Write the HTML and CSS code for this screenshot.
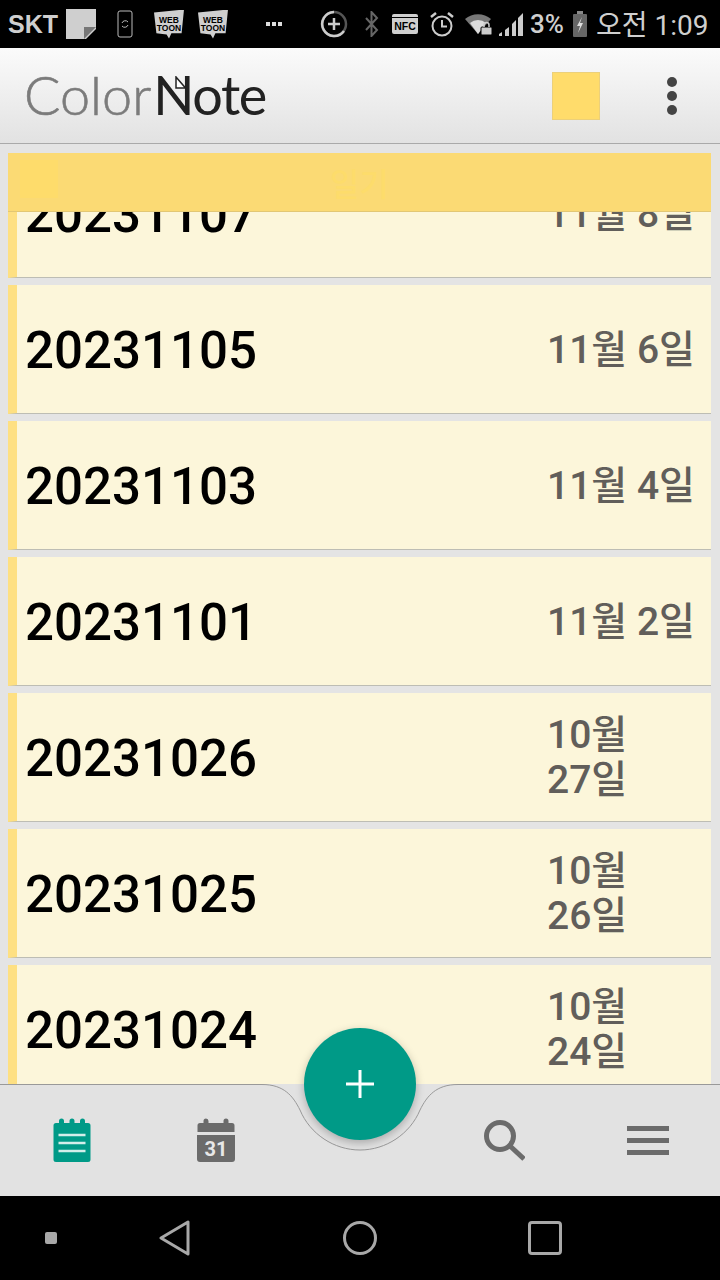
FILE: index.html
```html
<!DOCTYPE html>
<html lang="ko">
<head>
  <meta charset="UTF-8">
  <title>ColorNote</title>
  <link rel="stylesheet" href="styles.css">
</head>
<body>

<div class="phone">

  <!-- status bar -->
  <div class="status">
    <span class="skt">SKT</span>
    <svg class="st st-note" viewBox="0 0 30 30"><path d="M0 0h30v20L20 30H0z" fill="#cfcfcf"/><path d="M30 18L18 30V18z" fill="#777"/></svg>
    <svg class="st st-phone" viewBox="0 0 16 28"><rect x="1" y="1" width="14" height="26" rx="2" fill="none" stroke="#bbb" stroke-width="1"/><path d="M5 13a3.500 3.500 0 0 1 6-1M11 15a3.500 3.500 0 0 1-6 1" fill="none" stroke="#bbb" stroke-width="1"/></svg>
    <span class="toon">WEB<br>TOON</span>
    <span class="toon toon-2">WEB<br>TOON</span>
    <svg class="st st-dots" viewBox="0 0 18 6"><rect x="1" y="1" width="4" height="4" fill="#ddd"/><rect x="7" y="1" width="4" height="4" fill="#ddd"/><rect x="13" y="1" width="4" height="4" fill="#ddd"/></svg>
    <svg class="st st-plus" viewBox="0 0 28 28"><circle cx="14" cy="14" r="12" fill="none" stroke="#555" stroke-width="2.500"/><path d="M14 2A12 12 0 1 0 24 21" fill="none" stroke="#ccc" stroke-width="2.500"/><path d="M14 8v12M8 14h12" stroke="#ccc" stroke-width="2.500"/></svg>
    <svg class="st st-bt" viewBox="0 0 15 26"><path d="M2 7l11 12-5.500 6V1L13 7 2 19" fill="none" stroke="#666" stroke-width="2"/></svg>
    <span class="nfc">NFC</span>
    <svg class="st st-alarm" viewBox="0 0 24 26"><circle cx="12" cy="15" r="9.500" fill="none" stroke="#ccc" stroke-width="2"/><path d="M12 9v6.500h5" fill="none" stroke="#ccc" stroke-width="2"/><path d="M1 6l5-4M23 6l-5-4" stroke="#ccc" stroke-width="2.500"/></svg>
    <svg class="st st-wifi" viewBox="0 0 28 24"><path d="M0 7a20 20 0 0 1 26 0L13 22z" fill="#777"/><path d="M5 11a12 12 0 0 1 16 0l-8 11z" fill="#ddd"/><rect x="16" y="15" width="11" height="8" rx="1" fill="#ccc" stroke="#000"/><path d="M19 15v-2a2.500 2.500 0 0 1 5 0v2" fill="none" stroke="#ccc" stroke-width="1.500"/></svg>
    <svg class="st st-signal" viewBox="0 0 24 24"><path d="M0 24v-2l3-2v4z" fill="#ccc"/><path d="M6 24v-6l4-3v9z" fill="#ccc"/><path d="M13 24V12l4-4v16z" fill="#ccc"/><path d="M19 24V6l5-5v23z" fill="#ccc"/></svg>
    <span class="pct">3%</span>
    <svg class="st st-batt" viewBox="0 0 14 26"><rect x="4" y="0" width="6" height="3" fill="#888"/><rect x="0" y="3" width="14" height="23" rx="1" fill="#666"/><path d="M9 6l-5 9h3l-2 7 5-10H7z" fill="#ddd"/></svg>
    <span class="clock">오전 1:09</span>
  </div>

  <!-- app bar -->
  <div class="appbar">
    <div class="logo"><span class="logo-a">Color</span><span class="logo-b">Note</span>
      <svg class="ear" viewBox="0 0 12 14"><path d="M1 1l9.500 11H1z" fill="#fff" stroke="#222" stroke-width="1.500"/></svg>
    </div>
    <div class="swatch"></div>
    <div class="more"><i></i><i></i><i></i></div>
  </div>

  <!-- note list -->
  <div class="list">
    <div class="row"><span class="name">20231107</span><span class="date">11월 8일</span></div>
    <div class="row"><span class="name">20231105</span><span class="date">11월 6일</span></div>
    <div class="row"><span class="name">20231103</span><span class="date">11월 4일</span></div>
    <div class="row"><span class="name">20231101</span><span class="date">11월 2일</span></div>
    <div class="row"><span class="name">20231026</span><span class="date">10월 27일</span></div>
    <div class="row"><span class="name">20231025</span><span class="date">10월 26일</span></div>
    <div class="row"><span class="name">20231024</span><span class="date">10월 24일</span></div>

    <div class="sticky">
      <div class="sticky-bar">
        <span class="sticky-box"></span>
        <span class="sticky-text">일기</span>
      </div>
    </div>
  </div>

  <!-- bottom tabs -->
  <div class="tabs">
    <svg class="notch" viewBox="0 0 720 70"><path d="M0 .5H262C284 .5 293 12 300 26 310 50 334 66 360 66S410 50 420 26C427 12 436 .5 458 .5H720" fill="none" stroke="#999" stroke-width="1"/></svg>
    <button class="fab">
      <svg viewBox="0 0 30 30"><path d="M15 1v28M1 15h28" stroke="#fff" stroke-width="3"/></svg>
    </button>
    <div class="tab">
      <svg class="tab-ic" viewBox="0 0 38 44"><path d="M3 5h3V3a2.500 2.500 0 0 1 5 0v2h5.500V3a2.500 2.500 0 0 1 5 0v2H27V3a2.500 2.500 0 0 1 5 0v2h3a2.500 2.500 0 0 1 2.500 2.500v34A2.500 2.500 0 0 1 35 44H3a2.500 2.500 0 0 1-2.500-2.500v-34A2.500 2.500 0 0 1 3 5z" fill="#009a87"/><path d="M5.500 17h27M5.500 25h27M5.500 33h27" stroke="#d3eeea" stroke-width="2.500"/></svg>
    </div>
    <div class="tab">
      <div class="cal">
        <svg class="cal-top" viewBox="0 0 38 16"><path d="M3 5h3.500V3a2.500 2.500 0 0 1 5 0v2h15V3a2.500 2.500 0 0 1 5 0v2H35a2.500 2.500 0 0 1 2.500 2.500V14H.5V7.500A2.500 2.500 0 0 1 3 5z" fill="#6b6b6b"/></svg>
        <div class="cal-num">31</div>
      </div>
    </div>
    <div class="tab tab-gap"></div>
    <div class="tab">
      <svg class="search-ic" viewBox="0 0 42 42"><circle cx="17" cy="17" r="13.500" fill="none" stroke="#6b6b6b" stroke-width="5"/><path d="M27 27l14 13" stroke="#6b6b6b" stroke-width="5"/></svg>
    </div>
    <div class="tab">
      <div class="burger"><i></i><i></i><i></i></div>
    </div>
  </div>

  <!-- android nav -->
  <div class="nav">
    <span class="nav-dot"></span>
    <svg class="nav-back" viewBox="0 0 32 36"><path d="M2 18L29 2v32z" fill="none" stroke="#a8a8a8" stroke-width="3" stroke-linejoin="round"/></svg>
    <span class="nav-home"></span>
    <span class="nav-recent"></span>
  </div>

</div>

</body>
</html>
```
FILE: styles.css
```css
* {
  box-sizing: border-box;
}

html, body {
  margin: 0;
  padding: 0;
}

body {
  font-family: Roboto, "Noto Sans CJK KR", sans-serif;
  background-color: #000;
}

.phone {
  width: 720px;
  height: 1280px;
  display: flex;
  flex-direction: column;
  overflow: hidden;
}

/* status bar */
.status {
  height: 48px;
  flex: none;
  background-color: #000;
  color: #cfcfcf;
  display: flex;
  align-items: center;
  padding-left: 8px;
}

.st {
  display: block;
  flex: none;
}

.skt {
  width: 49px;
  font-size: 25px;
  font-weight: 700;
  font-family: "Liberation Sans", sans-serif;
  white-space: nowrap;
}

.st-note { width: 30px; height: 30px; margin-left: 9px; }
.st-phone { width: 16px; height: 28px; margin-left: 21px; }

.toon {
  width: 30px;
  height: 29px;
  margin-left: 21px;
  background-color: #cfcfcf;
  color: #000;
  font-family: "Liberation Sans", sans-serif;
  font-size: 8.5px;
  font-weight: 700;
  line-height: 8px;
  text-align: center;
  padding-top: 6px;
  clip-path: polygon(0 10%, 100% 0, 92% 82%, 58% 82%, 50% 100%, 42% 86%, 8% 82%);
}

.toon-2 { margin-left: 14px; }

.st-dots { width: 18px; height: 6px; margin-left: 37px; }
.st-plus { width: 28px; height: 28px; margin-left: 37px; }
.st-bt { width: 15px; height: 26px; margin-left: 16px; }

.nfc {
  width: 26px;
  height: 20px;
  margin-left: 13px;
  padding-top: 4px;
  background: linear-gradient(#cfcfcf 0 3px, #000 3px 4px, #cfcfcf 4px);
  border-radius: 2px;
  color: #000;
  font-family: "Liberation Sans", sans-serif;
  font-size: 10.5px;
  font-weight: 700;
  line-height: 16px;
  text-align: center;
}

.st-alarm { width: 24px; height: 26px; margin-left: 12px; }
.st-wifi { width: 28px; height: 24px; margin-left: 11px; }
.st-signal { width: 24px; height: 24px; margin-left: 6px; }

.pct {
  width: 34px;
  margin-left: 7px;
  font-size: 26px;
  font-weight: 500;
  font-family: Roboto, sans-serif;
  white-space: nowrap;
}

.st-batt { width: 14px; height: 26px; margin-left: 9px; }

.clock {
  margin-left: 9px;
  margin-top: -2px;
  font-size: 28px;
  white-space: nowrap;
}

/* app bar */
.appbar {
  height: 96px;
  flex: none;
  background: linear-gradient(#fbfbfb, #e2e2e2);
  border-bottom: 1px solid #a9a9a9;
  display: flex;
  align-items: center;
  padding: 0 0 0 24px;
}

.logo {
  position: relative;
  width: 528px;
  margin-top: -2px;
  font-family: Lato, sans-serif;
  font-weight: 300;
  font-size: 54px;
  line-height: 54px;
  white-space: nowrap;
}

.logo-a {
  color: #7b7b7b;
  -webkit-text-stroke: 0.6px #7b7b7b;
}

.logo-b {
  color: #222;
  font-weight: 400;
  letter-spacing: -1.4px;
  margin-left: 2px;
}

.ear {
  position: absolute;
  left: 151px;
  top: 8px;
  width: 12px;
  height: 14px;
}

.swatch {
  width: 48px;
  height: 48px;
  background-color: #ffdc6b;
  border: 1px solid #ecd07a;
}

.more {
  margin-left: 67px;
  display: flex;
  flex-direction: column;
  gap: 4px;
}

.more i {
  display: block;
  width: 10px;
  height: 10px;
  border-radius: 50%;
  background-color: #444;
}

/* list */
.list {
  position: relative;
  flex: 1;
  min-height: 0;
  overflow: hidden;
  background-color: #e4e4e4;
  padding: 5px 9px 0 8px;
  display: flex;
  flex-direction: column;
  gap: 7px;
}

.row {
  height: 129px;
  flex: none;
  display: flex;
  align-items: center;
  background-color: #fcf6da;
  border-left: 9px solid #fee082;
  border-bottom: 1px solid #bdbdb4;
  padding: 2px 0 0 8px;
}

.name {
  width: 522px;
  flex: none;
  font-size: 51px;
  font-weight: 500;
  color: #000;
}

.date {
  width: 150px;
  flex: none;
  font-size: 39px;
  line-height: 45px;
  font-weight: 500;
  color: #615e5a;
  word-break: keep-all;
}

/* the header hides the scrolled row, grey margin included */
.sticky {
  position: absolute;
  left: 0;
  right: 0;
  top: 0;
  height: 68px;
  background-color: #e4e4e4;
  padding: 9px 9px 0 8px;
}

.sticky-bar {
  position: relative;
  height: 59px;
  background-color: #fbda74;
  border-bottom: 1px solid #e2c774;
  display: flex;
  align-items: center;
  justify-content: center;
}

.sticky-box {
  position: absolute;
  left: 12px;
  top: 7px;
  width: 38px;
  height: 38px;
  background-color: #fedc6b;
}

.sticky-text {
  font-size: 32px;
  font-weight: 500;
  color: #fddc6b;
}

/* bottom tabs */
.tabs {
  position: relative;
  height: 112px;
  flex: none;
  background-color: #e2e2e2;
  display: flex;
  padding-top: 34px;
}

.notch {
  position: absolute;
  left: 0;
  top: 0;
  width: 720px;
  height: 70px;
}

.fab {
  position: absolute;
  left: 304px;
  top: -56px;
  width: 112px;
  height: 112px;
  padding: 0;
  border: none;
  border-radius: 50%;
  background-color: #009a87;
  box-shadow: 0 3px 8px rgba(0, 0, 0, 0.25);
  display: flex;
  align-items: center;
  justify-content: center;
}

.fab svg {
  width: 30px;
  height: 30px;
}

.tab {
  width: 144px;
  height: 44px;
  display: flex;
  justify-content: center;
  align-items: center;
}

.tab-ic {
  width: 38px;
  height: 44px;
}

.search-ic {
  width: 42px;
  height: 42px;
  flex: none;
}

.tab .cal {
  position: relative;
  width: 38px;
  height: 44px;
}

.cal-top {
  display: block;
  width: 38px;
  height: 16px;
}

.cal-num {
  height: 27px;
  margin-top: 1px;
  background-color: #6b6b6b;
  border-radius: 0 0 3px 3px;
  color: #e8e8e8;
  font-size: 20px;
  font-weight: 700;
  line-height: 28px;
  text-align: center;
}

.burger {
  display: flex;
  flex-direction: column;
  gap: 7px;
}

.burger i {
  display: block;
  width: 42px;
  height: 5px;
  background-color: #6b6b6b;
}

/* android nav */
.nav {
  position: relative;
  height: 84px;
  flex: none;
  background-color: #000;
  display: flex;
  align-items: center;
  padding-left: 45px;
}

.nav-dot {
  width: 12px;
  height: 12px;
  border-radius: 2px;
  background-color: #a8a8a8;
}

.nav-back {
  width: 32px;
  height: 36px;
  margin-left: 102px;
}

.nav-home {
  width: 34px;
  height: 34px;
  margin-left: 152px;
  border: 3px solid #a8a8a8;
  border-radius: 50%;
}

.nav-recent {
  width: 34px;
  height: 34px;
  margin-left: 151px;
  border: 3px solid #a8a8a8;
  border-radius: 4px;
}
```
